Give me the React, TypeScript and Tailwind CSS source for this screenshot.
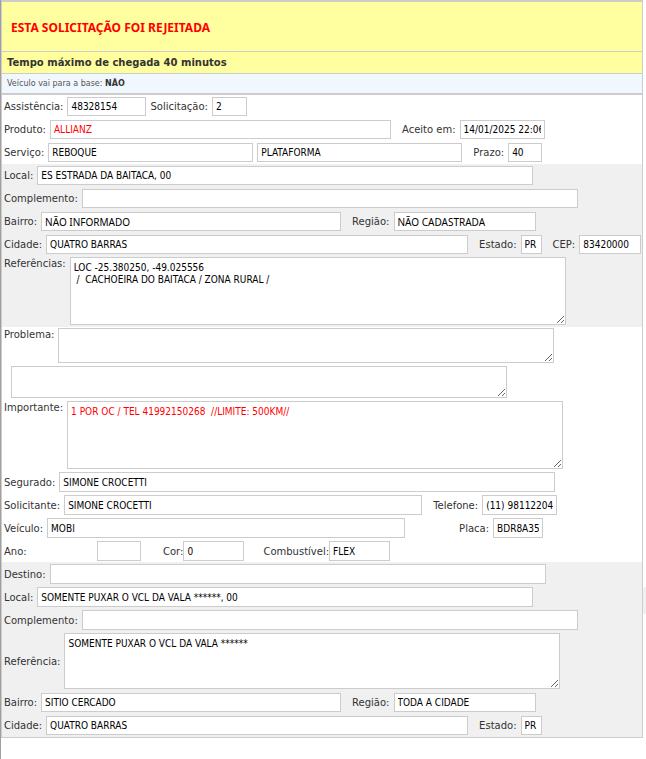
import { useId } from 'react';
import clsx from 'clsx';

interface FieldProps {
  label?: string;
  name: string;
  value?: string;
  className: string;
  labelClassName?: string;
  multiline?: boolean;
  alert?: boolean;
}

const controlStyle = 'block min-w-0 border border-[#ccc] bg-white px-[3px] text-[10px] outline-none';

function getFont(value: string): string {
  return /[ÃÕ]/.test(value)
    ? 'font-["Noto_Sans",sans-serif]'
    : 'font-["DejaVu_Sans_Condensed","DejaVu_Sans",sans-serif]';
}

function Field({ label, name, value = '', className, labelClassName, multiline, alert }: FieldProps) {
  const id = useId();
  const color = alert ? 'text-[#f00]' : 'text-black';

  return (
    <>
      {label && (
        <label htmlFor={id} className={clsx('shrink-0 pt-px whitespace-nowrap', labelClassName)}>
          {label}
        </label>
      )}
      {multiline ? (
        <textarea
          id={id}
          name={name}
          aria-label={label ? undefined : name}
          defaultValue={value}
          className={clsx(controlStyle, getFont(value), color, 'py-1 leading-3', className)}
        />
      ) : (
        <input
          id={id}
          name={name}
          type="text"
          aria-label={label ? undefined : name}
          defaultValue={value}
          className={clsx(controlStyle, getFont(value), color, 'leading-4', className)}
        />
      )}
    </>
  );
}

function Row({ children, className = 'items-center py-[2px]' }: { children: React.ReactNode; className?: string }) {
  return <div className={clsx('flex gap-1 pl-[2px]', className)}>{children}</div>;
}

export default function App() {
  return (
    <main className='relative min-h-screen border-l border-[#a0a0a0] bg-white pr-[3px] font-["DejaVu_Sans",Verdana,sans-serif] text-[10px] leading-3 text-[#333]'>
      <form className="border border-t-2 border-[#ccc]">
        {/* Header */}
        <h1 className='border-b border-[#ccc] bg-[#ffff9f] px-[9px] pt-[19px] pb-[17px] font-["Noto_Sans",sans-serif] text-[12px] leading-[13px] font-bold text-[#f00]'>
          ESTA SOLICITAÇÃO FOI REJEITADA
        </h1>
        <h2 className="border-b border-[#ccc] bg-[#ffff9f] px-[5px] py-1 text-[10px] leading-[13px] font-bold">
          Tempo máximo de chegada 40 minutos
        </h2>
        <p className="border-b-2 border-[#ccc] bg-[#f0f7ff] px-[5px] py-1 text-[8px] leading-[11px] text-[#555]">
          Veículo vai para a base: <b className="text-[#333]">NÃO</b>
        </p>

        {/* Service */}
        <section>
          <Row>
            <Field label="Assistência:" name="assistencia" value="48328154" className="h-[19px] w-[79px]" />
            <Field label="Solicitação:" name="solicitacao" value="2" className="h-[19px] w-[35px]" />
          </Row>
          <Row>
            <Field label="Produto:" name="produto" value="ALLIANZ" alert className="h-[19px] w-[341px]" />
            <Field label="Aceito em:" name="aceito" value="14/01/2025 22:06" className="h-[19px] w-[85px]" labelClassName="ml-[7px]" />
          </Row>
          <Row>
            <Field label="Serviço:" name="servico" value="REBOQUE" className="h-[19px] w-[205px]" />
            <Field name="tipo" value="PLATAFORMA" className="h-[19px] w-[205px]" />
            <Field label="Prazo:" name="prazo" value="40" className="h-[19px] w-[34px]" labelClassName="ml-[7px]" />
          </Row>
        </section>

        {/* Origin */}
        <section className="bg-[#f0f0f0]">
          <Row>
            <Field label="Local:" name="local" value="ES ESTRADA DA BAITACA, 00" className="h-[19px] w-[496px]" />
          </Row>
          <Row>
            <Field label="Complemento:" name="complemento" className="h-[19px] w-[496px]" />
          </Row>
          <Row>
            <Field label="Bairro:" name="bairro" value="NÃO INFORMADO" className="h-[19px] w-[300px]" />
            <Field label="Região:" name="regiao" value="NÃO CADASTRADA" className="h-[19px] w-[142px]" labelClassName="ml-[7px]" />
          </Row>
          <Row>
            <Field label="Cidade:" name="cidade" value="QUATRO BARRAS" className="h-[19px] w-[422px]" />
            <Field label="Estado:" name="estado" value="PR" className="h-[19px] w-[21px]" labelClassName="ml-[7px]" />
            <Field label="CEP:" name="cep" value="83420000" className="h-[19px] w-[62px]" labelClassName="ml-[7px]" />
          </Row>
          <Row className="items-start pt-px pb-[2px]">
            <Field
              multiline
              label="Referências:"
              name="referencias"
              value={'LOC -25.380250, -49.025556\n /  CACHOEIRA DO BAITACA / ZONA RURAL /'}
              className="h-[68px] w-[496px]"
            />
          </Row>
        </section>

        {/* Problem and customer */}
        <section>
          <Row className="items-start pt-px pb-[2px]">
            <Field multiline label="Problema:" name="problema" className="h-[35px] w-[496px]" />
          </Row>
          <Row className="ml-[7px] pt-px pb-[2px]">
            <Field multiline name="observacao" className="h-8 w-[496px]" />
          </Row>
          <Row className="items-start pt-px pb-[2px]">
            <Field
              multiline
              alert
              label="Importante:"
              name="importante"
              value="1 POR OC / TEL 41992150268  //LIMITE: 500KM//"
              className="h-[68px] w-[496px]"
            />
          </Row>
          <Row className="items-center pt-px pb-[2px]">
            <Field label="Segurado:" name="segurado" value="SIMONE CROCETTI" className="h-5 w-[496px]" />
          </Row>
          <Row className="items-center pt-px pb-[2px]">
            <Field label="Solicitante:" name="solicitante" value="SIMONE CROCETTI" className="h-5 w-[358px]" />
            <Field label="Telefone:" name="telefone" value="(11) 981122042" className="h-5 w-[75px]" labelClassName="ml-[7px]" />
          </Row>
          <Row className="items-center pt-px pb-[2px]">
            <Field label="Veículo:" name="veiculo" value="MOBI" className="h-5 w-[358px]" />
            <Field label="Placa:" name="placa" value="BDR8A35" className="h-5 w-[50px]" labelClassName="ml-[50px]" />
          </Row>
          <Row className="items-center py-px">
            <Field label="Ano:" name="ano" className="h-5 w-11" labelClassName="w-[89px]" />
            <div className="ml-[18px] flex items-center">
              <Field label="Cor:" name="cor" value="0" className="h-5 w-[61px]" />
            </div>
            <div className="ml-[15px] flex items-center">
              <Field label="Combustível:" name="combustivel" value="FLEX" className="h-5 w-[61px]" />
            </div>
          </Row>
        </section>

        {/* Destination */}
        <section className="bg-[#f0f0f0]">
          <Row>
            <Field label="Destino:" name="destino" className="h-5 w-[496px]" />
          </Row>
          <Row className="items-center pt-px pb-[2px]">
            <Field label="Local:" name="destino_local" value="SOMENTE PUXAR O VCL DA VALA ******, 00" className="h-5 w-[496px]" />
          </Row>
          <Row className="items-center pt-px pb-[2px]">
            <Field label="Complemento:" name="destino_complemento" className="h-5 w-[496px]" />
          </Row>
          <Row className="items-center pt-px pb-[2px]">
            <Field
              multiline
              label="Referência:"
              name="destino_referencia"
              value="SOMENTE PUXAR O VCL DA VALA ******"
              className="h-14 w-[496px]"
            />
          </Row>
          <Row>
            <Field label="Bairro:" name="destino_bairro" value="SITIO CERCADO" className="h-[19px] w-[300px]" />
            <Field label="Região:" name="destino_regiao" value="TODA A CIDADE" className="h-[19px] w-[142px]" labelClassName="ml-[7px]" />
          </Row>
          <Row>
            <Field label="Cidade:" name="destino_cidade" value="QUATRO BARRAS" className="h-[19px] w-[422px]" />
            <Field label="Estado:" name="destino_estado" value="PR" className="h-[19px] w-[21px]" labelClassName="ml-[7px]" />
          </Row>
        </section>
      </form>

      {/* Side tab peeking in from the right edge */}
      <div className="absolute top-[587px] right-0 h-[27px] w-[3px] rounded-tl-sm bg-[#f0f0f0]" />
    </main>
  );
}
